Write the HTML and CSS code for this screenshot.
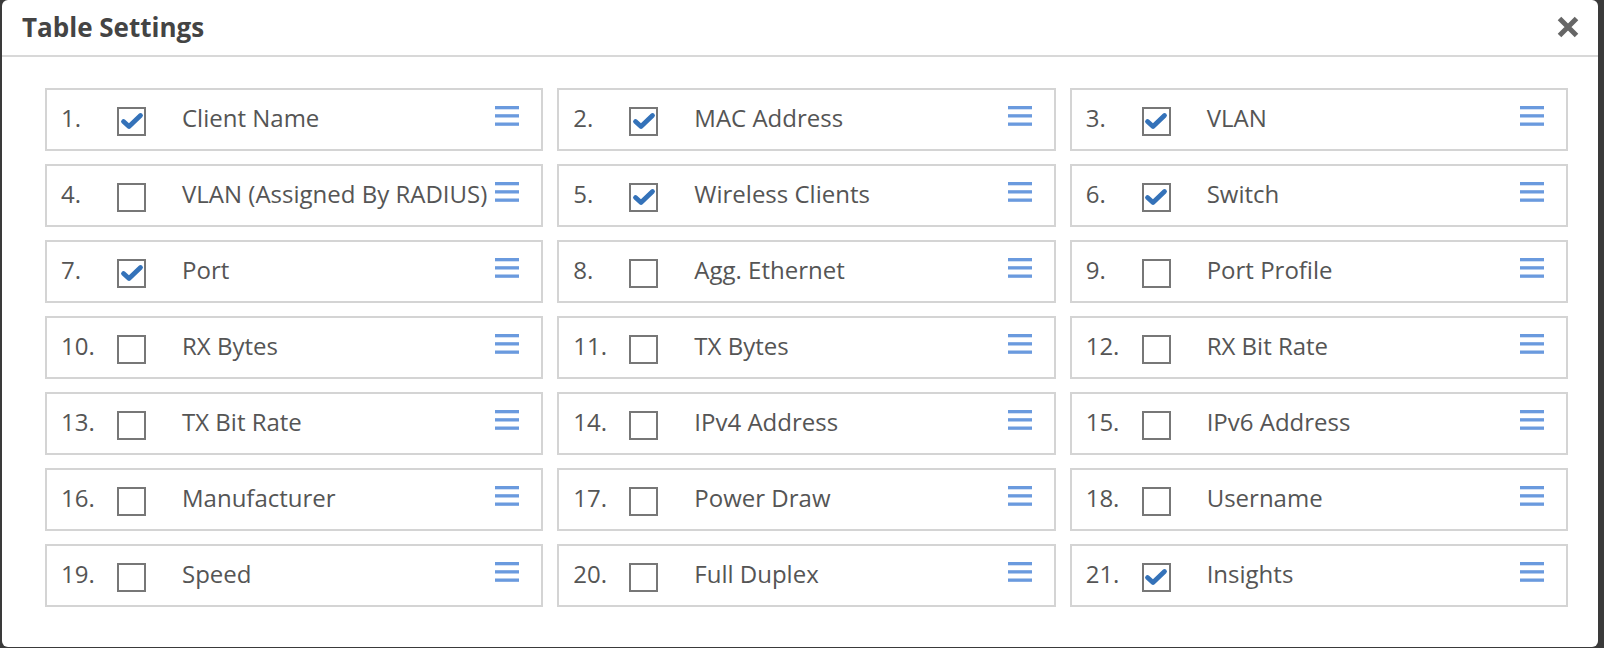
FILE: index.html
```html
<!DOCTYPE html>
<html lang="en">
<head>
  <meta charset="UTF-8">
  <meta name="viewport" content="width=device-width, initial-scale=1">
  <title>Table Settings</title>
  <link rel="stylesheet" href="styles.css">
</head>
<body>
  <div class="modal">
    <div class="modal-header">
      <h2>Table Settings</h2>
      <button class="close-btn" aria-label="Close">
        <svg width="24" height="24" viewBox="0 0 24 24">
          <path d="M3.5 3.5 L20.5 20.5 M20.5 3.5 L3.5 20.5" stroke="#666" stroke-width="5" fill="none"/>
        </svg>
      </button>
    </div>

    <div class="modal-body">
      <!-- Column list, rows filled by JS -->
      <ul class="column-list" id="columnList"></ul>
    </div>
  </div>

  <script>
    const columns = [
      { name: 'Client Name', on: true },
      { name: 'MAC Address', on: true },
      { name: 'VLAN', on: true },
      { name: 'VLAN (Assigned By RADIUS)', on: false },
      { name: 'Wireless Clients', on: true },
      { name: 'Switch', on: true },
      { name: 'Port', on: true },
      { name: 'Agg. Ethernet', on: false },
      { name: 'Port Profile', on: false },
      { name: 'RX Bytes', on: false },
      { name: 'TX Bytes', on: false },
      { name: 'RX Bit Rate', on: false },
      { name: 'TX Bit Rate', on: false },
      { name: 'IPv4 Address', on: false },
      { name: 'IPv6 Address', on: false },
      { name: 'Manufacturer', on: false },
      { name: 'Power Draw', on: false },
      { name: 'Username', on: false },
      { name: 'Speed', on: false },
      { name: 'Full Duplex', on: false },
      { name: 'Insights', on: true }
    ];

    const checkSvg = '<svg width="24" height="24" viewBox="0 0 24 24">' +
      '<path d="M3.5 12.5 L9 17.5 L20.5 6.5" stroke="#3472b9" stroke-width="4.8" ' +
      'stroke-linecap="round" stroke-linejoin="round" fill="none"/></svg>';

    const handleSvg = '<svg width="24" height="20" viewBox="0 0 24 20">' +
      '<rect x="0" y="0" width="24" height="3.3" fill="#6a9ade"/>' +
      '<rect x="0" y="8.2" width="24" height="3.3" fill="#6a9ade"/>' +
      '<rect x="0" y="16.5" width="24" height="3.3" fill="#6a9ade"/></svg>';

    const list = document.getElementById('columnList');
    columns.forEach((col, i) => {
      const li = document.createElement('li');
      li.className = 'column-item';
      li.innerHTML =
        '<span class="num">' + (i + 1) + '.</span>' +
        '<span class="check' + (col.on ? ' checked' : '') + '">' + (col.on ? checkSvg : '') + '</span>' +
        '<span class="label">' + col.name + '</span>' +
        '<span class="handle">' + handleSvg + '</span>';
      list.appendChild(li);
    });
  </script>
</body>
</html>
```

FILE: styles.css
```css
* {
  margin: 0;
  padding: 0;
  box-sizing: border-box;
}
body {
  background-color: #3a3a3a;
  font-family: "Open Sans", "Liberation Sans", sans-serif;
  color: #555;
  overflow: hidden;
}

.modal {
  width: 1596px;
  height: 647px;
  margin-left: 2px;
  background: #fff;
  border-radius: 6px;
}

/* Header */
.modal-header {
  display: flex;
  align-items: center;
  justify-content: space-between;
  height: 57px;
  padding: 0 18px 2px 20px;
  border-bottom: 2px solid #d8d8d8;
}
.modal-header h2 {
  font-size: 26px;
  font-weight: 700;
  color: #444;
}
.close-btn {
  border: none;
  background: none;
  display: flex;
  cursor: pointer;
}

/* Column grid */
.modal-body {
  padding: 31px 30px 0 43px;
}
.column-list {
  list-style: none;
  display: grid;
  grid-template-columns: repeat(3, 1fr);
  column-gap: 14px;
  row-gap: 13px;
}
.column-item {
  display: flex;
  align-items: center;
  height: 63px;
  padding: 0 22px 0 14px;
  border: 2px solid #d4d4d4;
  font-size: 24px;
}
.num,
.label {
  padding-bottom: 5px;
}
.num {
  width: 56px;
  flex-shrink: 0;
}
.check {
  width: 29px;
  height: 29px;
  flex-shrink: 0;
  border: 2px solid #777;
  margin: 3px 36px 0 0;
  display: flex;
  align-items: center;
  justify-content: center;
}
.label {
  flex: 1;
  white-space: nowrap;
}
.handle {
  display: flex;
  flex-shrink: 0;
  padding-bottom: 8px;
  cursor: grab;
}
```
